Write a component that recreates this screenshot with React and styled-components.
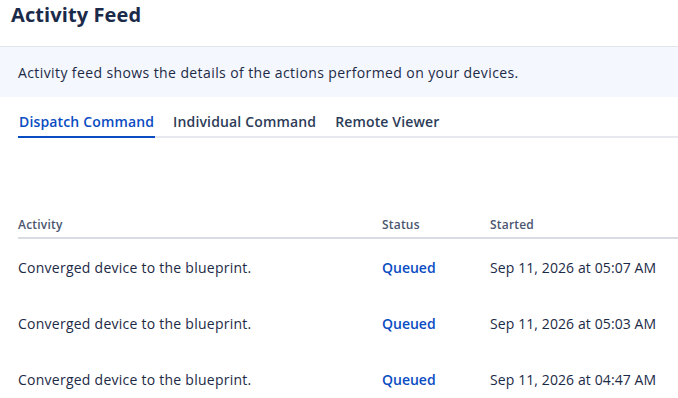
import React from "react";
import styled, { createGlobalStyle } from "styled-components";

const Global = createGlobalStyle`
  html, body { margin: 0; padding: 0; background: #ffffff; }
  body { font-family: "Open Sans", "Noto Sans", sans-serif; color: #1c2a47; }
`;

const Page = styled.div`
  width: 678px;
  height: 398px;
  overflow: hidden;
  display: flex;
  flex-direction: column;
  & > * { flex-shrink: 0; }
`;

const Header = styled.header`
  height: 46px;
  padding: 0 11px;
  border-bottom: 1px solid #e2e5ea;
  display: flex;
  align-items: flex-start;
`;

const Title = styled.h1`
  margin: 0;
  padding-top: 3px;
  font-size: 20px;
  line-height: 24px;
  font-weight: 700;
  letter-spacing: 0.1px;
  color: #1b2a4a;
`;

const Banner = styled.div`
  height: 50px;
  background: #f4f7fd;
  padding: 0 18px;
  display: flex;
  align-items: center;
  font-size: 14px;
  font-weight: 500;
  letter-spacing: 0.4px;
  color: #1c2a47;
`;

const Body = styled.div`
  padding-left: 18px;
`;

const Tabs = styled.nav`
  margin-top: 16px;
  display: flex;
  gap: 17px;
  border-bottom: 2px solid #e7e9ee;
`;

const Tab = styled.div`
  padding: 0 1px 5px;
  margin-bottom: -2px;
  font-size: 14px;
  line-height: 18px;
  font-weight: 600;
  letter-spacing: 0.15px;
  color: ${(p) => (p.$active ? "#0a4cc2" : "#2c3b57")};
  border-bottom: 2px solid ${(p) => (p.$active ? "#0a4cc2" : "transparent")};
`;

const Table = styled.div`
  margin-top: 74px;
`;

const Row = styled.div`
  display: grid;
  grid-template-columns: 364px 108px 1fr;
  align-items: center;
`;

const HeadRow = styled(Row)`
  height: 24px;
  padding-bottom: 1px;
  border-bottom: 2px solid #d9dde3;
`;

const HeadCell = styled.div`
  font-size: 12px;
  font-weight: 600;
  letter-spacing: 0.2px;
  color: #4b5670;
`;

const BodyRow = styled(Row)`
  height: 56px;
`;

const Cell = styled.div`
  font-size: 14px;
  letter-spacing: ${(p) => (p.$status ? "0" : p.$date ? "0.1px" : "0.25px")};
  color: ${(p) => (p.$status ? "#0a4cc2" : "#1c2a47")};
  font-weight: ${(p) => (p.$status ? 600 : 400)};
`;

const rows = [
  { activity: "Converged device to the blueprint.", status: "Queued", started: "Sep 11, 2026 at 05:07 AM" },
  { activity: "Converged device to the blueprint.", status: "Queued", started: "Sep 11, 2026 at 05:03 AM" },
  { activity: "Converged device to the blueprint.", status: "Queued", started: "Sep 11, 2026 at 04:47 AM" },
];

export default function App() {
  return (
    <Page>
      <Global />
      <Header>
        <Title>Activity Feed</Title>
      </Header>
      <Banner>Activity feed shows the details of the actions performed on your devices.</Banner>
      <Body>
        <Tabs>
          <Tab $active>Dispatch Command</Tab>
          <Tab>Individual Command</Tab>
          <Tab>Remote Viewer</Tab>
        </Tabs>
        <Table>
          <HeadRow>
            <HeadCell>Activity</HeadCell>
            <HeadCell>Status</HeadCell>
            <HeadCell>Started</HeadCell>
          </HeadRow>
          {rows.map((r, i) => (
            <BodyRow key={i}>
              <Cell>{r.activity}</Cell>
              <Cell $status>{r.status}</Cell>
              <Cell $date>{r.started}</Cell>
            </BodyRow>
          ))}
        </Table>
      </Body>
    </Page>
  );
}
